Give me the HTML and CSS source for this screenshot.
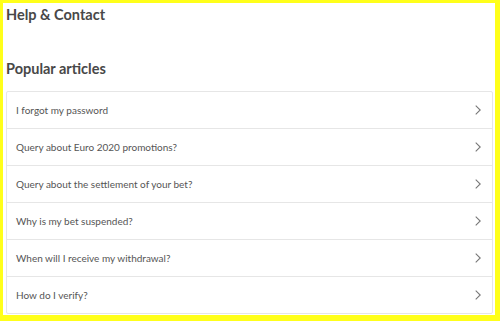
FILE: index.html
```html
<!DOCTYPE html>
<html>
<head>
<meta charset="utf-8">
<link rel="stylesheet" href="styles.css">
</head>
<body>
<div class="frame">
  <div class="page">
    <h1 class="title">Help &amp; Contact</h1>
    <h2 class="section">Popular articles</h2>
    <ul class="list">
      <li class="row"><span>I forgot my password</span><svg class="chev" viewBox="0 0 6 10"><path d="M0.7 0.7 L5.2 5 L0.7 9.3"/></svg></li>
      <li class="row"><span>Query about Euro 2020 promotions?</span><svg class="chev" viewBox="0 0 6 10"><path d="M0.7 0.7 L5.2 5 L0.7 9.3"/></svg></li>
      <li class="row"><span>Query about the settlement of your bet?</span><svg class="chev" viewBox="0 0 6 10"><path d="M0.7 0.7 L5.2 5 L0.7 9.3"/></svg></li>
      <li class="row"><span>Why is my bet suspended?</span><svg class="chev" viewBox="0 0 6 10"><path d="M0.7 0.7 L5.2 5 L0.7 9.3"/></svg></li>
      <li class="row"><span>When will I receive my withdrawal?</span><svg class="chev" viewBox="0 0 6 10"><path d="M0.7 0.7 L5.2 5 L0.7 9.3"/></svg></li>
      <li class="row"><span>How do I verify?</span><svg class="chev" viewBox="0 0 6 10"><path d="M0.7 0.7 L5.2 5 L0.7 9.3"/></svg></li>
    </ul>
  </div>
</div>
</body>
</html>
```

FILE: styles.css
```css
html, body {
  margin: 0;
  padding: 0;
}
body {
  background: #ffff1a;
  font-family: Lato, "Open Sans", sans-serif;
  color: #444;
}
.frame {
  padding: 3px 5px 6px 3px;
  height: 321px;
  box-sizing: border-box;
}
.page {
  background: #fff;
  height: 100%;
  padding: 0 2px 0 3px;
  box-sizing: border-box;
  overflow: hidden;
}
.title {
  margin: 0;
  padding-top: 3px;
  font-size: 14.5px;
  font-weight: 700;
  line-height: 18px;
  color: #484848;
}
.section {
  margin: 36px 0 0;
  font-size: 14.5px;
  font-weight: 700;
  line-height: 18px;
  color: #484848;
}
.list {
  list-style: none;
  margin: 13px 0 0;
  padding: 0;
  border: 1px solid #e6e6e6;
  border-radius: 2px;
}
.row {
  display: flex;
  align-items: center;
  justify-content: space-between;
  height: 36px;
  padding: 0 11px 0 9px;
  font-size: 10px;
  color: #555;
  border-top: 1px solid #e6e6e6;
}
.row:first-child {
  border-top: none;
}
.chev {
  width: 6px;
  height: 10px;
  fill: none;
  stroke: #777;
  stroke-width: 1.1;
}
```
